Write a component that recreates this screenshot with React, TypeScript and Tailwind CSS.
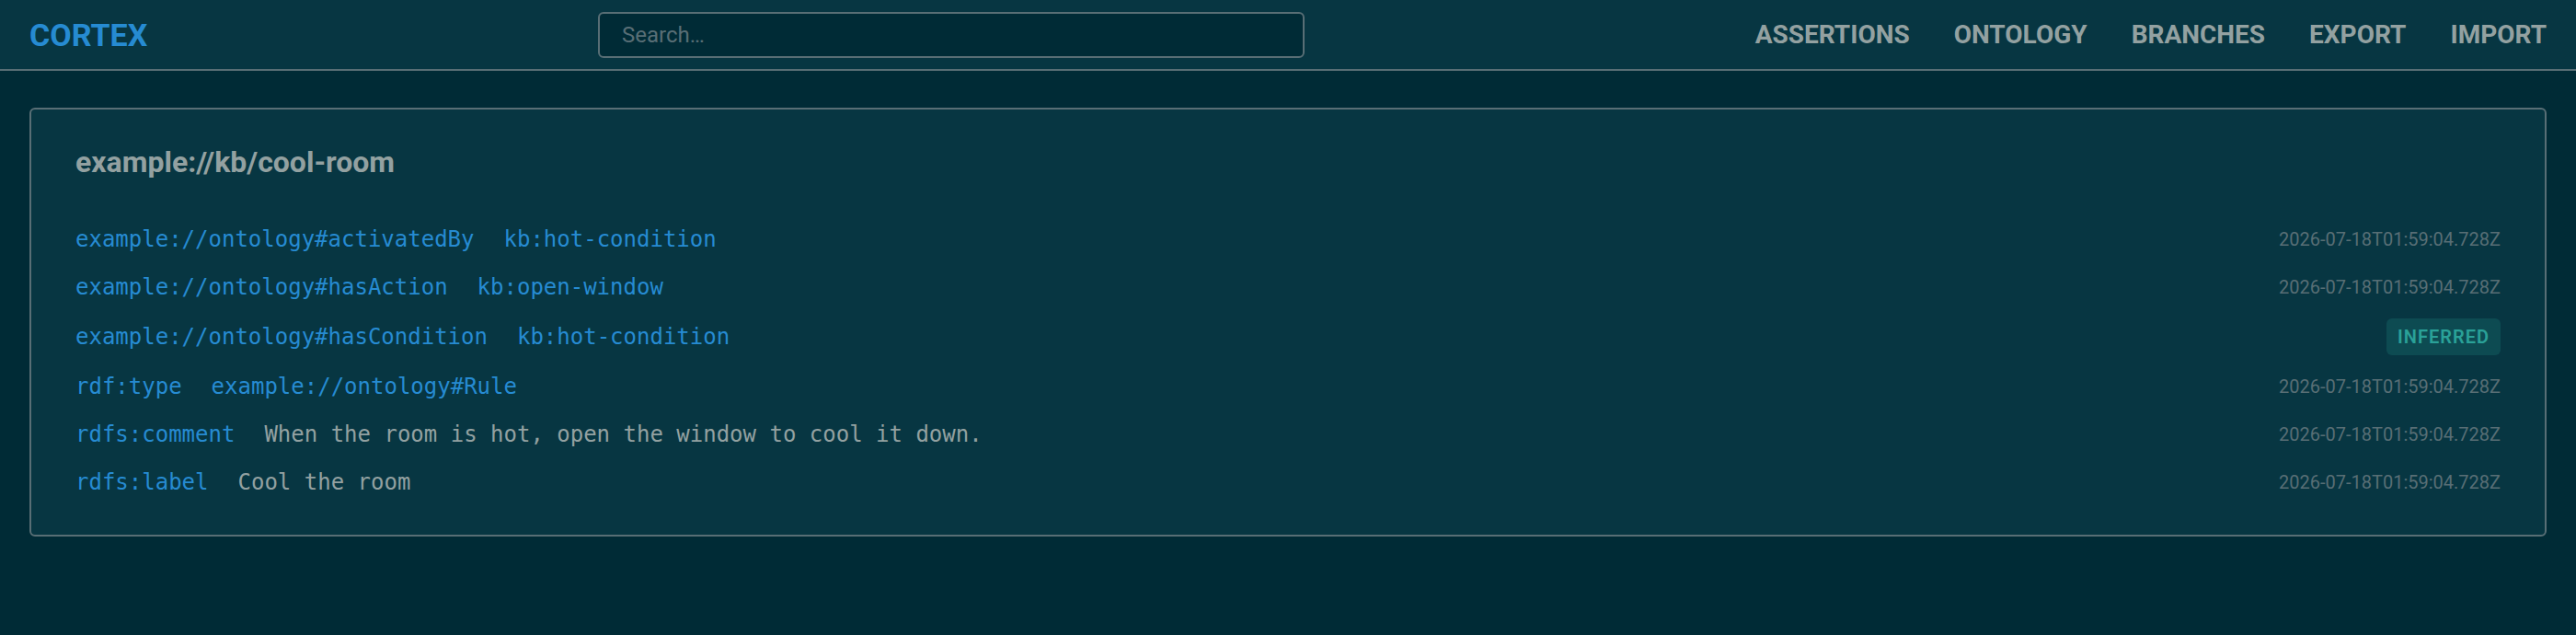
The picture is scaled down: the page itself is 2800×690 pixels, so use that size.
import React from 'react';

type Triple = {
  predicate: string;
  object: string;
  literal?: boolean;
  inferred?: boolean;
  createdAt: string;
};

const subject = 'example://kb/cool-room';

const triples: Triple[] = [
  { predicate: 'example://ontology#activatedBy', object: 'kb:hot-condition', createdAt: '2026-07-18T01:59:04.728Z' },
  { predicate: 'example://ontology#hasAction', object: 'kb:open-window', createdAt: '2026-07-18T01:59:04.728Z' },
  { predicate: 'example://ontology#hasCondition', object: 'kb:hot-condition', inferred: true, createdAt: '2026-07-18T01:59:04.728Z' },
  { predicate: 'rdf:type', object: 'example://ontology#Rule', createdAt: '2026-07-18T01:59:04.728Z' },
  { predicate: 'rdfs:comment', object: 'When the room is hot, open the window to cool it down.', literal: true, createdAt: '2026-07-18T01:59:04.728Z' },
  { predicate: 'rdfs:label', object: 'Cool the room', literal: true, createdAt: '2026-07-18T01:59:04.728Z' },
];

const navItems = ['Assertions', 'Ontology', 'Branches', 'Export', 'Import'];

function Header() {
  return (
    <header className="h-[77px] bg-[#073642] border-b-2 border-[#586e75] px-8 flex items-center justify-between">
      <a href="#" className="text-[34px] leading-10 font-bold text-[#268bd2]">
        CORTEX
      </a>
      <input
        type="text"
        placeholder="Search…"
        className="w-[768px] h-[50px] rounded-md border-2 border-[#586e75] bg-[#002b36] px-6 text-[24px] text-[#93a1a1] placeholder:text-[#586e75] outline-none"
      />
      <nav className="flex items-center gap-12">
        {navItems.map((item) => (
          <a key={item} href="#" className="text-[28px] leading-9 font-bold uppercase text-[#93a1a1] hover:text-white">
            {item}
          </a>
        ))}
      </nav>
    </header>
  );
}

function TripleRow({ t }: { t: Triple }) {
  return (
    <li className="flex items-center justify-between">
      <div className="flex items-center gap-8 font-['DejaVu_Sans_Mono',monospace] text-[24px] leading-9">
        <span className="text-[#268bd2]">{t.predicate}</span>
        <span className={t.literal ? 'text-[#93a1a1]' : 'text-[#268bd2]'}>{t.object}</span>
      </div>
      {t.inferred ? (
        <span className="rounded-md bg-[#2aa198]/20 px-3 py-2 text-[20px] leading-6 font-semibold tracking-[1px] text-[#2aa198]">
          INFERRED
        </span>
      ) : (
        <span className="text-[20px] leading-7 text-[#586e75]">{t.createdAt}</span>
      )}
    </li>
  );
}

export default function App() {
  return (
    <div className="min-h-screen bg-[#002b36] font-['Roboto','Liberation_Sans',sans-serif]">
      <Header />
      <main className="px-8 pt-10">
        <section className="rounded-md border-2 border-[#586e75] bg-[#073642] px-12 pt-[37px] pb-[39px]">
          <h1 className="text-[32px] leading-10 font-bold text-[#93a1a1]">{subject}</h1>
          <ul className="mt-[46px] flex flex-col gap-4">
            {triples.map((t) => (
              <TripleRow key={t.predicate} t={t} />
            ))}
          </ul>
        </section>
      </main>
    </div>
  );
}
